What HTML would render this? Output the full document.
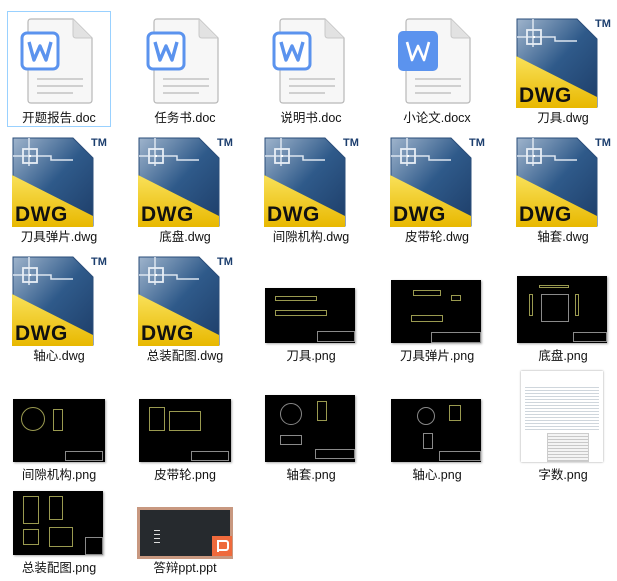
<!DOCTYPE html>
<html><head><meta charset="utf-8"><style>
body{margin:0;width:617px;height:581px;background:#fff;position:relative;overflow:hidden;font-family:"Liberation Sans","Noto Sans CJK SC",sans-serif}
.a{position:absolute}
.lb{position:absolute;width:126px;text-align:center;font-size:12.5px;color:#111;line-height:16px}
.sel{position:absolute;left:7px;top:11px;width:104px;height:116px;border:1px solid #99d1ff;box-sizing:border-box}
.dwgt{position:absolute;font:bold 21px "Liberation Sans",sans-serif;color:#111;letter-spacing:0.5px}
.tm{position:absolute;font:bold 11px "Liberation Sans",sans-serif;color:#1c3e6e}
.th{position:absolute;background:#000;box-shadow:1px 1px 2px #aaa;overflow:hidden}
.th i{position:absolute;border:1px solid #9a9a50;display:block}
.th b{position:absolute;border:1px solid #8a8a8a;display:block}
</style></head><body>
<svg width="0" height="0" style="position:absolute">
<defs>
<linearGradient id="bg" x1="0" y1="0" x2="1" y2="1"><stop offset="0" stop-color="#9fb4cc"/><stop offset="0.5" stop-color="#2f5a8a"/><stop offset="1" stop-color="#1d3d68"/></linearGradient>
<linearGradient id="yg" x1="0" y1="0" x2="0" y2="1"><stop offset="0" stop-color="#f9e15a"/><stop offset="1" stop-color="#e8b800"/></linearGradient>
<symbol id="page" viewBox="0 0 66 86"><path d="M4 1H46L65 20V82Q65 85 62 85H4Q1 85 1 82V4Q1 1 4 1Z" fill="#f7f7f7" stroke="#b8b8b8" stroke-width="1.2"/><path d="M46 1V17Q46 20 49 20H65" fill="#e2e2e2" stroke="#c8c8c8"/><rect x="10" y="60" width="46" height="2" fill="#d0d0d0"/><rect x="10" y="67" width="46" height="2" fill="#d0d0d0"/><rect x="10" y="74" width="36" height="2" fill="#d0d0d0"/></symbol>
<symbol id="dwg" viewBox="0 0 84 92"><path d="M2 2H62L82 22V90H2Z" fill="url(#bg)"/><path d="M2 2H62L82 22V90H2Z" fill="none" stroke="#2a4d7a"/><path d="M18 2V30M2 20H40V24H62" stroke="#dde6f0" stroke-width="1.5" fill="none"/><rect x="12" y="13" width="14" height="14" fill="none" stroke="#e8eef5" stroke-width="1.8"/><rect x="18" y="19" width="2" height="2" fill="#fff"/><path d="M1 39L82 80V91H1Z" fill="url(#yg)"/></symbol>
</defs></svg>

<div class="sel"></div>
<!-- row 1 -->
<svg class="a" style="left:27px;top:18px" width="66" height="86"><use href="#page"/></svg>
<svg class="a" style="left:20px;top:31px" width="40" height="40"><rect x="2" y="2" width="36" height="36" rx="5" fill="#fff" stroke="#5b93ee" stroke-width="3"/><path d="M9 11L14 29L20 15L26 29L31 11" fill="none" stroke="#5b93ee" stroke-width="3.4" stroke-linejoin="round"/></svg>
<svg class="a" style="left:153px;top:18px" width="66" height="86"><use href="#page"/></svg>
<svg class="a" style="left:146px;top:31px" width="40" height="40"><rect x="2" y="2" width="36" height="36" rx="5" fill="#fff" stroke="#5b93ee" stroke-width="3"/><path d="M9 11L14 29L20 15L26 29L31 11" fill="none" stroke="#5b93ee" stroke-width="3.4" stroke-linejoin="round"/></svg>
<svg class="a" style="left:279px;top:18px" width="66" height="86"><use href="#page"/></svg>
<svg class="a" style="left:272px;top:31px" width="40" height="40"><rect x="2" y="2" width="36" height="36" rx="5" fill="#fff" stroke="#5b93ee" stroke-width="3"/><path d="M9 11L14 29L20 15L26 29L31 11" fill="none" stroke="#5b93ee" stroke-width="3.4" stroke-linejoin="round"/></svg>
<svg class="a" style="left:405px;top:18px" width="66" height="86"><use href="#page"/></svg>
<svg class="a" style="left:397px;top:30px" width="42" height="42"><rect x="1" y="1" width="40" height="40" rx="5" fill="#5b93ee"/><path d="M10 12L15 30L21 16L27 30L32 12" fill="none" stroke="#fff" stroke-width="2.6" stroke-linejoin="round"/></svg>

<div class="lb" style="left:-4px;top:110px">开题报告.doc</div>
<div class="lb" style="left:122px;top:110px">任务书.doc</div>
<div class="lb" style="left:248px;top:110px">说明书.doc</div>
<div class="lb" style="left:374px;top:110px">小论文.docx</div>
<div class="lb" style="left:500px;top:110px">刀具.dwg</div>

<!-- DWG icons -->
<svg class="a" style="left:515px;top:17px" width="84" height="92"><use href="#dwg"/></svg><div class="dwgt" style="left:519px;top:84px">DWG</div><div class="tm" style="left:595px;top:18px">TM</div>

<svg class="a" style="left:11px;top:136px" width="84" height="92"><use href="#dwg"/></svg><div class="dwgt" style="left:15px;top:203px">DWG</div><div class="tm" style="left:91px;top:137px">TM</div>
<svg class="a" style="left:137px;top:136px" width="84" height="92"><use href="#dwg"/></svg><div class="dwgt" style="left:141px;top:203px">DWG</div><div class="tm" style="left:217px;top:137px">TM</div>
<svg class="a" style="left:263px;top:136px" width="84" height="92"><use href="#dwg"/></svg><div class="dwgt" style="left:267px;top:203px">DWG</div><div class="tm" style="left:343px;top:137px">TM</div>
<svg class="a" style="left:389px;top:136px" width="84" height="92"><use href="#dwg"/></svg><div class="dwgt" style="left:393px;top:203px">DWG</div><div class="tm" style="left:469px;top:137px">TM</div>
<svg class="a" style="left:515px;top:136px" width="84" height="92"><use href="#dwg"/></svg><div class="dwgt" style="left:519px;top:203px">DWG</div><div class="tm" style="left:595px;top:137px">TM</div>

<div class="lb" style="left:-4px;top:229px">刀具弹片.dwg</div>
<div class="lb" style="left:122px;top:229px">底盘.dwg</div>
<div class="lb" style="left:248px;top:229px">间隙机构.dwg</div>
<div class="lb" style="left:374px;top:229px">皮带轮.dwg</div>
<div class="lb" style="left:500px;top:229px">轴套.dwg</div>

<svg class="a" style="left:11px;top:255px" width="84" height="92"><use href="#dwg"/></svg><div class="dwgt" style="left:15px;top:322px">DWG</div><div class="tm" style="left:91px;top:256px">TM</div>
<svg class="a" style="left:137px;top:255px" width="84" height="92"><use href="#dwg"/></svg><div class="dwgt" style="left:141px;top:322px">DWG</div><div class="tm" style="left:217px;top:256px">TM</div>

<!-- thumbnails row 3 -->
<div class="th" style="left:265px;top:288px;width:90px;height:55px"><i style="left:10px;top:8px;width:40px;height:3px"></i><i style="left:10px;top:22px;width:50px;height:4px"></i><b style="left:52px;top:43px;width:36px;height:9px"></b></div>
<div class="th" style="left:391px;top:280px;width:90px;height:63px"><i style="left:22px;top:10px;width:26px;height:4px"></i><i style="left:20px;top:35px;width:30px;height:5px"></i><i style="left:60px;top:15px;width:8px;height:4px"></i><b style="left:40px;top:52px;width:48px;height:9px"></b></div>
<div class="th" style="left:517px;top:276px;width:90px;height:67px"><b style="left:24px;top:18px;width:26px;height:26px"></b><i style="left:22px;top:9px;width:28px;height:1px"></i><i style="left:12px;top:18px;width:2px;height:20px"></i><i style="left:58px;top:18px;width:2px;height:20px"></i><b style="left:56px;top:56px;width:32px;height:8px"></b></div>
<div class="lb" style="left:248px;top:348px">刀具.png</div>
<div class="lb" style="left:374px;top:348px">刀具弹片.png</div>
<div class="lb" style="left:500px;top:348px">底盘.png</div>

<!-- row 4 -->
<div class="th" style="left:13px;top:399px;width:92px;height:63px"><i style="left:8px;top:8px;width:22px;height:22px;border-radius:50%"></i><i style="left:40px;top:10px;width:8px;height:20px"></i><b style="left:52px;top:52px;width:36px;height:8px"></b></div>
<div class="th" style="left:139px;top:399px;width:92px;height:63px"><i style="left:10px;top:8px;width:14px;height:22px"></i><i style="left:30px;top:12px;width:30px;height:18px"></i><b style="left:52px;top:52px;width:36px;height:8px"></b></div>
<div class="th" style="left:265px;top:395px;width:90px;height:67px"><i style="left:15px;top:8px;width:20px;height:20px;border-radius:50%;border-color:#888"></i><i style="left:52px;top:6px;width:8px;height:18px"></i><b style="left:15px;top:40px;width:20px;height:8px"></b><b style="left:50px;top:54px;width:38px;height:8px"></b></div>
<div class="th" style="left:391px;top:399px;width:90px;height:63px"><i style="left:26px;top:8px;width:16px;height:16px;border-radius:50%;border-color:#888"></i><i style="left:58px;top:6px;width:10px;height:14px"></i><b style="left:32px;top:34px;width:8px;height:14px"></b><b style="left:48px;top:52px;width:40px;height:8px"></b></div>
<div class="a" style="left:521px;top:371px;width:82px;height:91px;background:#fff;box-shadow:0 0 2px #999">
<div class="a" style="left:4px;top:14px;width:74px;height:46px;background:repeating-linear-gradient(#fff 0 2px,#cfd6dc 2px 3px)"></div>
<div class="a" style="left:26px;top:62px;width:40px;height:27px;background:repeating-linear-gradient(#f4f4f4 0 2px,#c8c8c8 2px 3px);border:1px solid #ccc"></div></div>
<div class="lb" style="left:-4px;top:467px">间隙机构.png</div>
<div class="lb" style="left:122px;top:467px">皮带轮.png</div>
<div class="lb" style="left:248px;top:467px">轴套.png</div>
<div class="lb" style="left:374px;top:467px">轴心.png</div>
<div class="lb" style="left:500px;top:467px">字数.png</div>

<!-- row 5 -->
<div class="th" style="left:13px;top:491px;width:90px;height:64px"><i style="left:10px;top:5px;width:14px;height:26px"></i><i style="left:36px;top:5px;width:12px;height:22px"></i><i style="left:10px;top:38px;width:14px;height:14px"></i><i style="left:36px;top:36px;width:22px;height:18px"></i><b style="left:72px;top:46px;width:16px;height:16px"></b></div>
<div class="a" style="left:137px;top:507px;width:96px;height:52px;background:#c89880"></div>
<div class="a" style="left:140px;top:510px;width:90px;height:46px;background:#262a2e"><div class="a" style="left:14px;top:20px;width:6px;height:14px;background:repeating-linear-gradient(#ddd 0 1px,#262a2e 1px 4px)"></div></div>
<div class="a" style="left:212px;top:536px;width:20px;height:20px;background:#ef6a3c"><div class="a" style="left:5px;top:4px;width:8px;height:7px;border:2px solid #fff;border-radius:0 3px 3px 0"></div><div class="a" style="left:5px;top:4px;width:2px;height:12px;background:#fff"></div></div>
<div class="lb" style="left:-4px;top:560px">总装配图.png</div>
<div class="lb" style="left:122px;top:560px">答辩ppt.ppt</div>

<div class="lb" style="left:-4px;top:348px">轴心.dwg</div>
<div class="lb" style="left:122px;top:348px">总装配图.dwg</div>
</body></html>
